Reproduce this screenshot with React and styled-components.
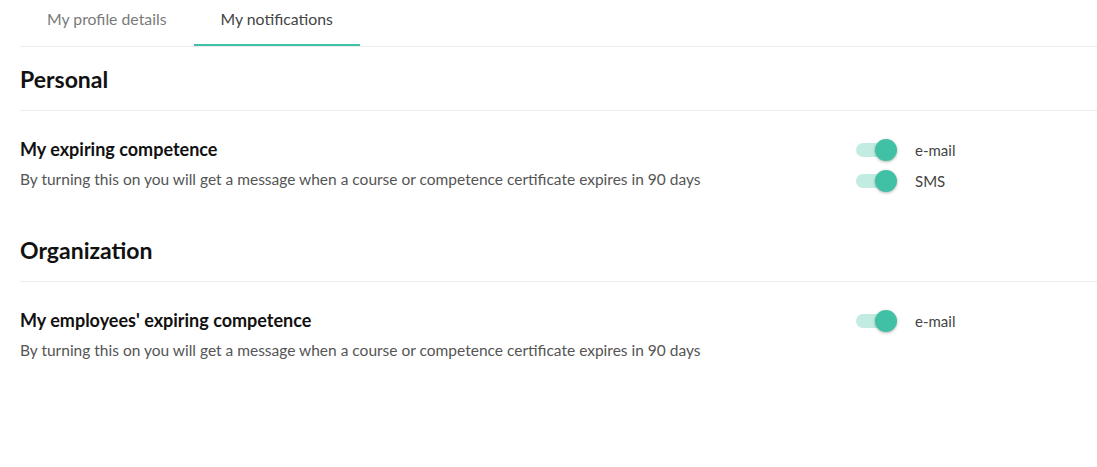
import React from 'react';
import styled, { createGlobalStyle } from 'styled-components';

const Global = createGlobalStyle`
  body {
    margin: 0;
    background: #fff;
    font-family: Lato, "Open Sans", sans-serif;
  }
`;

const Page = styled.div`
  padding-left: 20px;
`;

const TabBar = styled.div`
  display: flex;
  border-bottom: 1px solid #ececec;
`;

const Tab = styled.div`
  height: 46px;
  box-sizing: border-box;
  padding: 0 27px 7px;
  display: flex;
  align-items: center;
  font-size: 15.8px;
  color: ${(p) => (p.active ? '#444' : '#7a7a7a')};
  border-bottom: 2px solid ${(p) => (p.active ? '#40c0a5' : 'transparent')};
`;

const SectionHeader = styled.h2`
  margin: 0;
  font-size: 23px;
  font-weight: 700;
  line-height: 30px;
  color: #111;
  padding: ${(p) => (p.first ? '17px' : '43px')} 0 16px;
  border-bottom: 1px solid #ececec;
`;

const Row = styled.div`
  display: grid;
  grid-template-columns: 1fr 241px;
  padding-top: 26px;
`;

const Info = styled.div`
  display: flex;
  flex-direction: column;
`;

const Title = styled.div`
  font-size: 18px;
  font-weight: 700;
  line-height: 24px;
  color: #111;
`;

const Desc = styled.div`
  margin-top: 7px;
  font-size: 15.5px;
  line-height: 22px;
  color: #555;
`;

const Channels = styled.div`
  display: flex;
  flex-direction: column;
  gap: 9px;
  padding-top: 2px;
`;

const Channel = styled.div`
  display: flex;
  align-items: center;
  height: 22px;
  gap: 18px;
  font-size: 15px;
  color: #444;
`;

const Switch = styled.span`
  position: relative;
  width: 41px;
  height: 22px;
  display: inline-block;
`;

const Track = styled.span`
  position: absolute;
  left: 0;
  top: 4px;
  width: 34px;
  height: 14px;
  border-radius: 7px;
  background: #c2ece2;
`;

const Thumb = styled.span`
  position: absolute;
  left: 19px;
  top: 0;
  width: 22px;
  height: 22px;
  border-radius: 50%;
  background: #40c0a5;
  box-shadow: 0 1px 3px rgba(0, 0, 0, 0.3);
`;

const Toggle = ({ label }) => (
  <Channel>
    <Switch>
      <Track />
      <Thumb />
    </Switch>
    {label}
  </Channel>
);

const DESC =
  'By turning this on you will get a message when a course or competence certificate expires in 90 days';

export default function App() {
  return (
    <Page>
      <Global />
      <TabBar>
        <Tab>My profile details</Tab>
        <Tab active>My notifications</Tab>
      </TabBar>

      <SectionHeader first>Personal</SectionHeader>
      <Row>
        <Info>
          <Title>My expiring competence</Title>
          <Desc>{DESC}</Desc>
        </Info>
        <Channels>
          <Toggle label="e-mail" />
          <Toggle label="SMS" />
        </Channels>
      </Row>

      <SectionHeader>Organization</SectionHeader>
      <Row>
        <Info>
          <Title>My employees' expiring competence</Title>
          <Desc>{DESC}</Desc>
        </Info>
        <Channels>
          <Toggle label="e-mail" />
        </Channels>
      </Row>
    </Page>
  );
}
